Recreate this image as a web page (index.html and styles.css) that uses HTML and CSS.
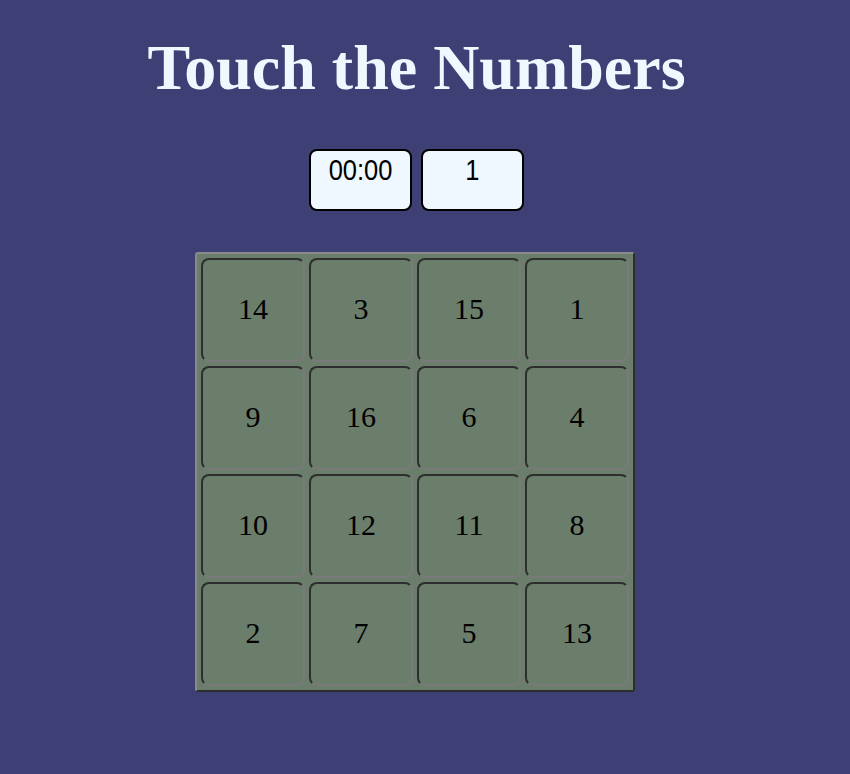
FILE: index.html
```html
<!DOCTYPE html>
<html>
<head>
<meta charset="utf-8">
<link rel="stylesheet" href="styles.css">
</head>
<body>
<div class="page">
  <h1 class="title">Touch the Numbers</h1>
  <div class="stats">
    <div class="stat"><span class="stat-text">00:00</span></div>
    <div class="stat"><span class="stat-text">1</span></div>
  </div>
  <div class="board">
    <div class="cell">14</div><div class="cell">3</div><div class="cell">15</div><div class="cell">1</div>
    <div class="cell">9</div><div class="cell">16</div><div class="cell">6</div><div class="cell">4</div>
    <div class="cell">10</div><div class="cell">12</div><div class="cell">11</div><div class="cell">8</div>
    <div class="cell">2</div><div class="cell">7</div><div class="cell">5</div><div class="cell">13</div>
  </div>
</div>
</body>
</html>
```
FILE: styles.css
```css
html, body {
  margin: 0;
  padding: 0;
  background: #3e3f75;
  height: 100%;
}
.page {
  width: 833px;
  display: flex;
  flex-direction: column;
  align-items: center;
}
.title {
  margin: 33px 0 0 0;
  font-family: "Liberation Serif", "Times New Roman", serif;
  font-weight: bold;
  font-size: 64px;
  line-height: 70px;
  color: #f0f8ff;
}
.stats {
  margin-top: 46px;
  display: flex;
  gap: 9px;
}
.stat {
  width: 99px;
  height: 58px;
  border: 2px solid #000;
  border-radius: 8px;
  background: #f0f8ff;
  font-family: "Liberation Sans", Arial, sans-serif;
  font-size: 30px;
  line-height: 38px;
  text-align: center;
  color: #000;
}
.stat-text {
  display: inline-block;
  transform: scaleX(0.85);
}
.board {
  margin-top: 41px;
  margin-right: 3px;
  display: grid;
  grid-template-columns: repeat(4, 104px);
  grid-auto-rows: 104px;
  gap: 4px;
  padding: 4px;
  background: #6b7d6b;
  border: 2px solid;
  border-color: #8a8a8a #2e2e2e #2e2e2e #8a8a8a;
  border-radius: 3px;
}
.cell {
  box-sizing: border-box;
  display: flex;
  align-items: center;
  justify-content: center;
  border: 2px solid;
  border-color: #2e2e2e #7a7a7a #7a7a7a #2e2e2e;
  border-radius: 8px;
  font-family: "Liberation Serif", "Times New Roman", serif;
  font-size: 30px;
  color: #000;
  padding-bottom: 3px;
}
```
